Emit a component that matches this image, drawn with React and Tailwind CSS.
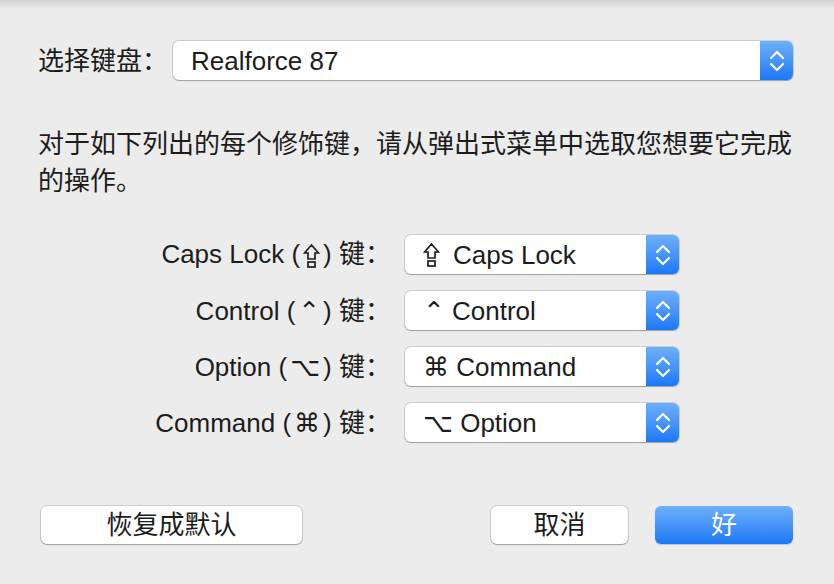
import React from 'react';

const font = { fontFamily: "'Liberation Sans', 'DejaVu Sans', 'Noto Sans CJK SC', sans-serif" };

function Chevrons() {
  return (
    <svg width="18" height="26" viewBox="0 0 18 26" fill="none" stroke="white" strokeWidth="2.2" strokeLinecap="round" strokeLinejoin="round">
      <path d="M3 10 L9 4 L15 10" />
      <path d="M3 16 L9 22 L15 16" />
    </svg>
  );
}

function CapsIcon() {
  return (
    <svg width="17" height="26" viewBox="0 0 17 26" fill="none" stroke="currentColor" strokeWidth="1.7" strokeLinejoin="miter" className="inline-block align-[-6px]">
      <path d="M8.5 2 L15.5 10 L12 10 L12 16 L5 16 L5 10 L1.5 10 Z" />
      <rect x="5" y="19" width="7" height="5" />
    </svg>
  );
}

function Popup({ children, className }) {
  return (
    <div className={`flex h-[39px] rounded-[6px] bg-white overflow-hidden shadow-[0_0_0_1px_rgba(0,0,0,0.13),0_1px_1px_rgba(0,0,0,0.22)] ${className}`}>
      <div className="flex-1 flex items-center pl-[18px] text-[26px] leading-none text-[#1c1c1c] whitespace-nowrap">
        {children}
      </div>
      <div className="w-[33px] flex items-center justify-center bg-gradient-to-b from-[#6db0fa] to-[#1878f6]">
        <Chevrons />
      </div>
    </div>
  );
}

function Row({ label, value }) {
  return (
    <div className="flex items-center">
      <div className="w-[353px] text-right text-[26px] leading-none text-[#1c1c1c] whitespace-nowrap">{label}</div>
      <Popup className="ml-[14px] w-[274px]">{value}</Popup>
    </div>
  );
}

// symbol inside the label's parentheses
function Sym({ children }) {
  return <span className="mx-[3px]">{children}</span>;
}

export default function App() {
  const rows = [
    { label: <>Caps Lock (<Sym><CapsIcon /></Sym>) 键：</>, value: <><CapsIcon /><span className="ml-[13px]">Caps Lock</span></> },
    { label: <>Control (<Sym>⌃</Sym>) 键：</>, value: <>⌃ Control</> },
    { label: <>Option (<Sym>⌥</Sym>) 键：</>, value: <>⌘ Command</> },
    { label: <>Command (<Sym>⌘</Sym>) 键：</>, value: <>⌥ Option</> },
  ];

  return (
    <div className="relative w-[834px] h-[584px] bg-[#ececec] overflow-hidden" style={font}>
      {/* sheet shadow from the title bar */}
      <div className="absolute inset-x-0 top-0 h-[9px] bg-gradient-to-b from-[#d0d0d0] to-[#ececec]" />

      <div className="pt-[41px] pl-[38px] pr-[41px] flex items-center">
        <span className="text-[26px] leading-none text-[#1c1c1c] w-[135px]">选择键盘：</span>
        <Popup className="flex-1">Realforce 87</Popup>
      </div>

      <p className="mt-[46px] px-[38px] text-[26px] leading-[37px] text-[#1c1c1c]">
        对于如下列出的每个修饰键，请从弹出式菜单中选取您想要它完成的操作。
      </p>

      <div className="mt-[35px] pl-[38px] flex flex-col gap-[17px]">
        {rows.map((r, i) => (
          <Row key={i} label={r.label} value={r.value} />
        ))}
      </div>

      <div className="mt-[64px] pl-[41px] pr-[41px] flex items-center">
        <button className="w-[261px] h-[38px] rounded-[6px] bg-white text-[26px] leading-none text-[#1c1c1c] shadow-[0_0_0_1px_rgba(0,0,0,0.13),0_1px_1px_rgba(0,0,0,0.22)]">
          恢复成默认
        </button>
        <div className="flex-1" />
        <button className="w-[137px] h-[38px] rounded-[6px] bg-white text-[26px] leading-none text-[#1c1c1c] shadow-[0_0_0_1px_rgba(0,0,0,0.13),0_1px_1px_rgba(0,0,0,0.22)]">
          取消
        </button>
        <button className="ml-[27px] w-[138px] h-[38px] rounded-[6px] bg-gradient-to-b from-[#6db0fa] to-[#1878f6] text-[26px] leading-none text-white shadow-[0_1px_1px_rgba(0,0,0,0.18)]">
          好
        </button>
      </div>
    </div>
  );
}
